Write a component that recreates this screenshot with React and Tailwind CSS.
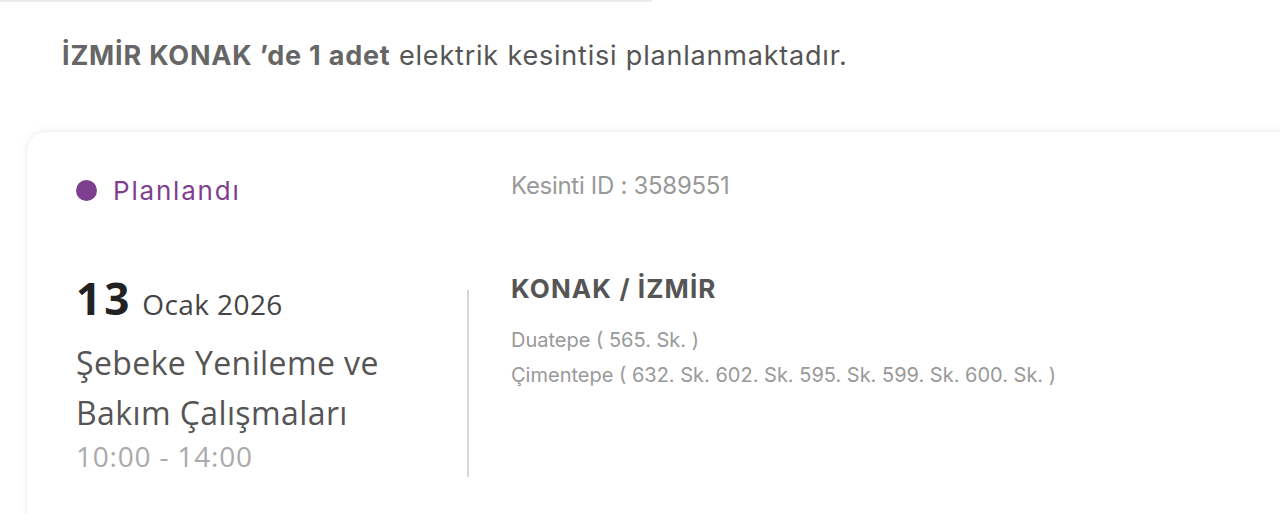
import React from "react";

export default function App() {
  return (
    <div className="w-[1280px] h-[514px] bg-white overflow-hidden relative" style={{ fontFamily: "Inter, 'Noto Sans', sans-serif" }}>
      <div className="h-[2px] w-[652px] bg-[#ececec]" />
      <div className="pl-[62px] pt-[36px] text-[27px] tracking-[0.8px] text-[#666] leading-[36px]">
        <span className="font-bold">İZMİR KONAK ’de 1 adet</span>{" "}
        <span className="text-[#555]">elektrik kesintisi planlanmaktadır.</span>
      </div>
      <div className="ml-[26px] mt-[57px] w-[1290px] h-[420px] rounded-[20px] bg-white shadow-[0_0_10px_rgba(0,0,0,0.06)] border border-[#f2f2f2] pl-[49px] pt-[36px]">
        <div className="flex">
          <div className="w-[435px] flex items-center gap-[16px] h-[44px]">
            <span className="w-[21px] h-[21px] rounded-full bg-[#7d3f8e]" />
            <span className="text-[26px] text-[#7d3f8e] tracking-[1.8px]">Planlandı</span>
          </div>
          <div className="h-[36px] leading-[36px] text-[24px] text-[#999] tracking-[-0.3px]">Kesinti ID : 3589551</div>
        </div>
        <div className="flex mt-[59px]">
          <div className="w-[391px]" style={{ fontFamily: "'Open Sans', sans-serif" }}>
            <div className="flex items-baseline gap-[10px] h-[54px]">
              <span className="text-[44px] font-bold text-[#222] leading-[54px] tracking-[3px]">13</span>
              <span className="text-[28px] text-[#444] tracking-[0.4px]">Ocak 2026</span>
            </div>
            <div className="text-[32px] leading-[50px] text-[#555] mt-[13px] tracking-[0.4px]">
              Şebeke Yenileme ve<br />Bakım Çalışmaları
            </div>
            <div className="text-[28px] leading-[36px] text-[#aaa] tracking-[0.8px]">10:00 - 14:00</div>
          </div>
          <div className="w-[2px] bg-[#d6d6d6] mt-[19px] h-[187px]" />
          <div className="pl-[42px]">
            <div className="text-[26px] font-bold text-[#555] leading-[36px] tracking-[1.1px]">KONAK / İZMİR</div>
            <div className="text-[20px] text-[#999] leading-[35px] mt-[16px]">
              Duatepe ( 565. Sk. )<br />Çimentepe ( 632. Sk. 602. Sk. 595. Sk. 599. Sk. 600. Sk. )
            </div>
          </div>
        </div>
      </div>
    </div>
  );
}
